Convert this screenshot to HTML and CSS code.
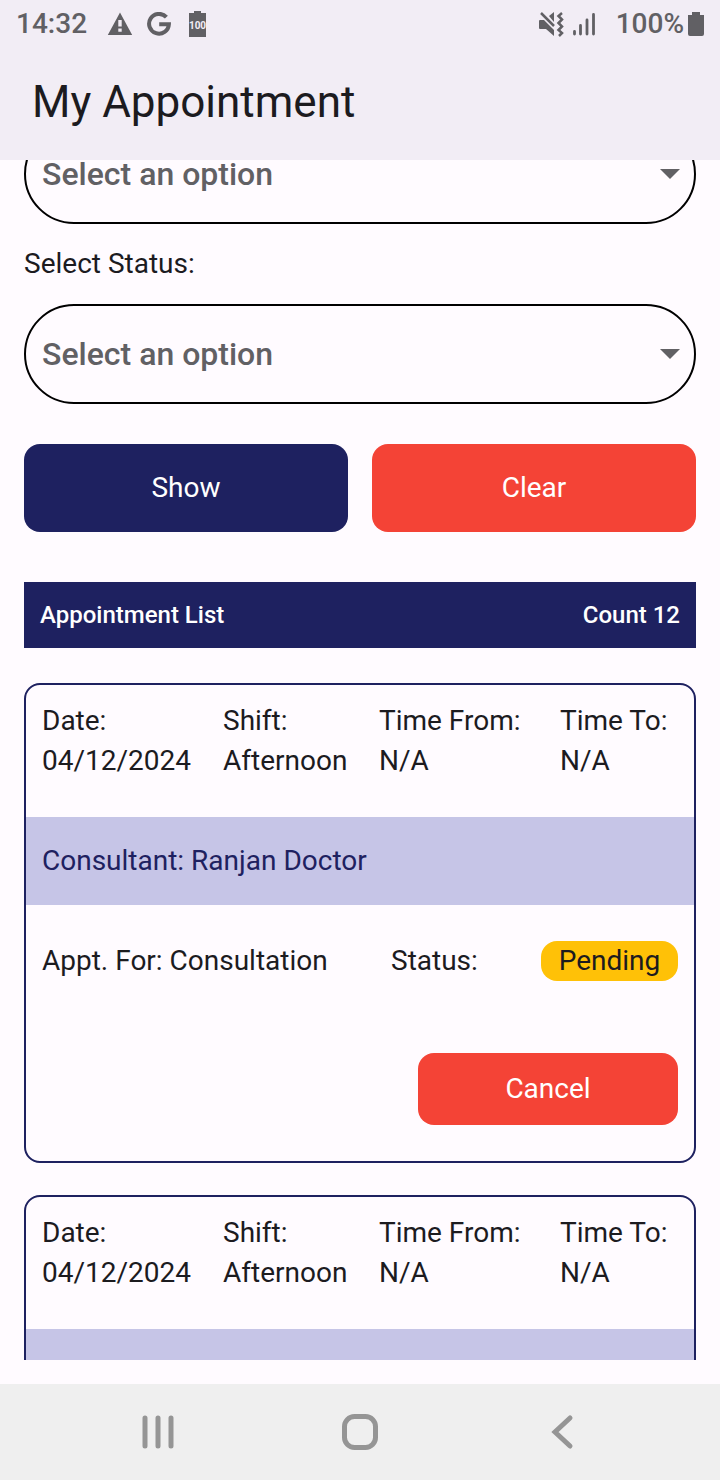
FILE: index.html
```html
<!DOCTYPE html>
<html lang="en">
<head>
<meta charset="utf-8">
<meta name="viewport" content="width=device-width, initial-scale=1">
<title>My Appointment</title>
<link rel="stylesheet" href="styles.css">
</head>
<body>
<div class="app">
  <header class="top">
    <div class="status-bar">
      <div class="status-group status-left">
        <span class="clock">14:32</span>
        <svg class="icon" width="26" height="24" viewBox="0 0 26 24" aria-hidden="true"><path fill="currentColor" fill-rule="evenodd" d="M13 0.500 25.200 23H0.800ZM11.300 8V14.500H14.700V8ZM11.300 16.500V19.700H14.700V16.500Z"/></svg>
        <svg class="icon" width="24" height="24" viewBox="0 0 24 24" aria-hidden="true"><path fill="none" stroke="currentColor" stroke-width="4" d="M19.400 5.200A9.900 9.900 0 1 0 21.900 12.200H12.200"/></svg>
        <svg class="icon battery-level" width="17" height="26" viewBox="0 0 17 26" aria-hidden="true"><path fill="currentColor" d="M5 0h7v2h5v24H0V2h5z"/><text class="level-text" x="8.500" y="18" text-anchor="middle">100</text></svg>
      </div>
      <div class="status-group status-right">
        <svg class="icon" width="26" height="26" viewBox="0 0 26 26" aria-hidden="true"><path fill="currentColor" d="M2 9H6L16 19V25L8 18H2Q1 18 1 17V10Q1 9 2 9ZM11 5 16 1V11Z"/><path fill="none" stroke="currentColor" stroke-width="2.500" d="M3 2 16 15"/><path fill="none" stroke="currentColor" stroke-width="2.500" d="M24 2 20.500 5 24 8.500 20.500 12 24 15.500 20.500 19 24 22 21 25"/></svg>
        <svg class="icon signal" width="24" height="26" viewBox="0 0 24 26" aria-hidden="true"><path fill="none" stroke="currentColor" stroke-width="2.800" stroke-linecap="round" d="M2.500 20.500V23M8.500 14.500V23M15 9V23M21.500 3.500V23"/></svg>
        <span class="percent">100%</span>
        <svg class="icon" width="16" height="24" viewBox="0 0 16 24" aria-hidden="true"><path fill="currentColor" d="M4 0h8v3h4v19q0 2-2 2H2q-2 0-2-2V3h4z"/></svg>
      </div>
    </div>
    <h1 class="title">My Appointment</h1>
  </header>

  <main class="content">
    <form class="filters">
      <div class="select-wrap">
        <select class="select" aria-label="Select an option"><option>Select an option</option></select>
        <svg class="caret" width="20" height="10" viewBox="0 0 20 10" aria-hidden="true"><path fill="currentColor" d="M0 0h20L10 10z"/></svg>
      </div>
      <label class="field-label" for="status">Select Status:</label>
      <div class="select-wrap">
        <select class="select" id="status"><option>Select an option</option></select>
        <svg class="caret" width="20" height="10" viewBox="0 0 20 10" aria-hidden="true"><path fill="currentColor" d="M0 0h20L10 10z"/></svg>
      </div>
      <div class="actions">
        <button class="button button-show" type="button">Show</button>
        <button class="button button-danger" type="reset">Clear</button>
      </div>
    </form>

    <div class="list-head">
      <h2 class="list-title">Appointment List</h2>
      <span>Count 12</span>
    </div>

    <div class="cards">
      <article class="card">
        <dl class="times">
          <div><dt>Date:</dt><dd>04/12/2024</dd></div>
          <div><dt>Shift:</dt><dd>Afternoon</dd></div>
          <div><dt>Time From:</dt><dd>N/A</dd></div>
          <div><dt>Time To:</dt><dd>N/A</dd></div>
        </dl>
        <div class="consultant">Consultant: Ranjan Doctor</div>
        <div class="details">
          <span>Appt. For: Consultation</span>
          <span>Status:</span>
          <span class="badge">Pending</span>
        </div>
        <div class="card-actions">
          <button class="button button-danger button-cancel" type="button">Cancel</button>
        </div>
      </article>

      <article class="card">
        <dl class="times">
          <div><dt>Date:</dt><dd>04/12/2024</dd></div>
          <div><dt>Shift:</dt><dd>Afternoon</dd></div>
          <div><dt>Time From:</dt><dd>N/A</dd></div>
          <div><dt>Time To:</dt><dd>N/A</dd></div>
        </dl>
        <div class="consultant"></div>
      </article>
    </div>
  </main>

  <nav class="nav-bar" aria-label="System">
    <button class="nav-button" type="button" aria-label="Recent apps"><svg width="40" height="40" viewBox="0 0 40 40"><path fill="none" stroke="currentColor" stroke-width="5" stroke-linecap="round" d="M7 6V34M20 6V34M33 6V34"/></svg></button>
    <button class="nav-button" type="button" aria-label="Home"><svg width="40" height="40" viewBox="0 0 40 40"><rect x="4.500" y="4.500" width="31" height="31" rx="10" fill="none" stroke="currentColor" stroke-width="5"/></svg></button>
    <button class="nav-button" type="button" aria-label="Back"><svg width="40" height="40" viewBox="0 0 40 40"><path fill="none" stroke="currentColor" stroke-width="5" stroke-linecap="round" d="M28 6 13 20 28 34"/></svg></button>
  </nav>
</div>
</body>
</html>
```
FILE: styles.css
```css
* {
  box-sizing: border-box;
}

body {
  margin: 0;
  background: #fffbff;
  color: #1c1b1f;
  font: 400 28px/40px Roboto, "Liberation Sans", sans-serif;
}

button,
select {
  font: inherit;
}

.app {
  display: flex;
  flex-direction: column;
  height: 100vh;
}

/* System status and page title */
.top {
  flex: none;
  background: #f2edf5;
}

.status-bar {
  display: flex;
  justify-content: space-between;
  height: 48px;
  padding: 0 16px;
  color: #616064;
  font-weight: 500;
}

.status-group {
  display: flex;
  align-items: center;
}

.status-left {
  gap: 14px;
}

.clock {
  margin-right: 6px;
}

.battery-level {
  margin-left: 4px;
}

.level-text {
  fill: #f2edf5;
  font-size: 10px;
  font-weight: 700;
}

.icon {
  flex: none;
}

.status-right {
  gap: 4px;
}

.signal {
  margin: 0 16px 0 4px;
}

.title {
  margin: 0;
  padding: 26px 32px 30px;
  font-size: 44px;
  line-height: 56px;
  font-weight: 400;
}

.content {
  flex: 1;
  min-height: 0;
  overflow: hidden;
  margin-bottom: 24px;
  padding: 0 24px;
}

.filters {
  display: flex;
  flex-direction: column;
  gap: 20px;
  margin-top: -36px;
}

.select-wrap {
  display: grid;
  align-items: center;
  color: #616064;
}

.select {
  grid-area: 1 / 1;
  width: 100%;
  height: 100px;
  padding: 0 48px 0 16px;
  border: 2px solid #000;
  border-radius: 50px;
  background: transparent;
  color: inherit;
  font-size: 32px;
  font-weight: 500;
  appearance: none;
}

.caret {
  grid-area: 1 / 1;
  justify-self: end;
  margin-right: 16px;
  pointer-events: none;
}

.actions {
  display: grid;
  grid-template-columns: 1fr 1fr;
  gap: 24px;
  margin-top: 20px;
}

.button {
  height: 88px;
  padding: 0 16px;
  border: 0;
  border-radius: 16px;
  color: #fff;
}

.button-show {
  background: #1e2160;
}

.button-danger {
  background: #f44336;
}

/* Appointments */
.list-head {
  display: flex;
  align-items: center;
  justify-content: space-between;
  margin: 50px 0 35px;
  padding: 13px 16px;
  background: #1e2160;
  color: #fff;
  font-size: 24px;
  font-weight: 500;
}

.list-title {
  margin: 0;
  font: inherit;
}

.cards {
  display: flex;
  flex-direction: column;
  gap: 32px;
}

.card {
  overflow: hidden;
  border: 2px solid #1e2160;
  border-radius: 16px;
}

.times {
  display: grid;
  grid-template-columns: 181fr 156fr 181fr 118fr;
  margin: 0;
  padding: 16px 16px 36px;
}

.times dd {
  margin: 0;
}

.consultant {
  min-height: 88px;
  padding: 24px 16px;
  background: #c6c5e7;
  color: #1e2160;
}

.details {
  display: grid;
  grid-template-columns: 349fr 150fr 137fr;
  padding: 36px 16px;
}

.badge {
  border-radius: 16px;
  background: #ffc107;
  text-align: center;
}

.card-actions {
  display: flex;
  justify-content: flex-end;
  padding: 36px 16px;
}

.button-cancel {
  width: 260px;
  height: 72px;
}

/* System navigation */
.nav-bar {
  flex: none;
  display: flex;
  justify-content: space-between;
  align-items: center;
  height: 96px;
  padding: 0 17%;
  background: #efefef;
}

.nav-button {
  display: flex;
  justify-content: center;
  width: 72px;
  padding: 8px 0;
  border: 0;
  background: none;
  color: #959595;
}
```
